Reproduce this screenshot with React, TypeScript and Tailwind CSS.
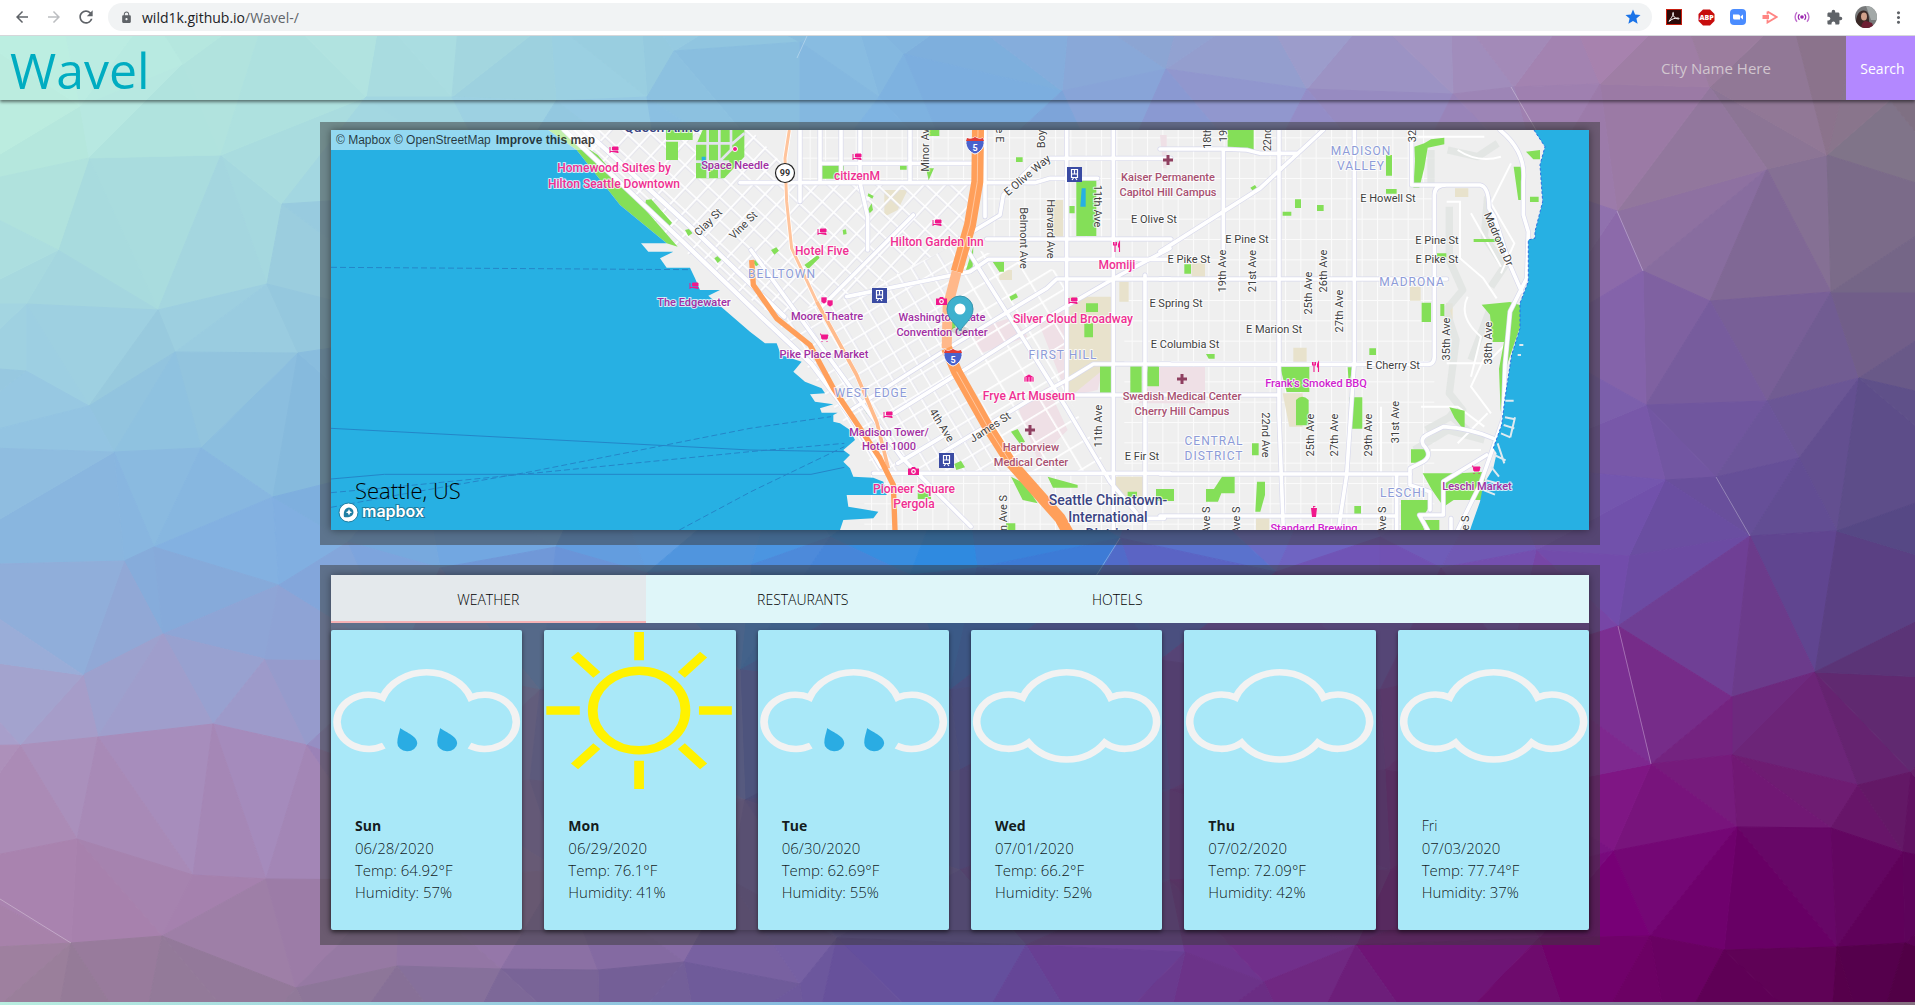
import React from "react";
import {
  MdArrowBack,
  MdArrowForward,
  MdExtension,
  MdLock,
  MdMoreVert,
  MdRefresh,
  MdStar,
} from "react-icons/md";

type Pt = [number, number];

/* ---------- low-poly background ---------- */

const meshPoints: Pt[] = [
  [80, 106], [89, 158], [221, 155], [282, 204], [58, 250], [26, 304], [158, 310], [267, 284],
  [175, 352], [298, 353], [26, 371], [89, 406], [114, 452], [201, 448], [273, 497], [154, 547],
  [124, 561], [279, 585], [163, 634], [83, 675], [265, 659], [98, 737], [213, 724], [307, 745],
  [20, 745], [77, 839], [193, 875], [266, 879], [71, 943], [162, 936], [296, 988],
  [-60, 190], [-50, 304], [-40, 366], [-70, 446], [-80, 566], [-60, 655], [-50, 746], [-70, 868], [-60, 950],
  [1617, 211], [1643, 271], [1767, 169], [1827, 155], [1890, 100], [1710, 301], [1831, 292],
  [1646, 405], [1767, 401], [1859, 378], [1665, 480], [1716, 477], [1799, 458], [1629, 556],
  [1750, 536], [1837, 531], [1618, 626], [1815, 672], [1732, 697], [1732, 755], [1651, 764],
  [1858, 785], [1613, 851], [1737, 827], [1831, 828], [1903, 852], [1911, 772], [1724, 950],
  [1837, 947], [1650, 936], [1905, 943],
  [1970, 200], [1990, 292], [1975, 405], [1980, 480], [2000, 580], [1990, 680], [1990, 870], [1980, 970],
  [183, 64], [800, 42], [674, 51], [1166, 69], [1514, 87], [904, 54], [366, 97], [452, 97],
  [556, 101], [879, 97], [1062, 91], [1307, 89], [1453, 94], [1710, 87], [1600, 84], [647, 97],
  [-50, 20], [60, 5], [150, 12], [270, 0], [380, 15], [460, 4], [550, 20], [640, 5], [740, 10],
  [850, 0], [960, 14], [1070, 4], [1180, 15], [1260, 5], [1370, 14], [1450, 2], [1570, 12],
  [1680, 4], [1790, 10], [1860, 20], [1980, 20],
  [500, 190], [660, 180], [800, 200], [960, 185], [1110, 195], [1260, 180], [1400, 200], [1540, 185],
  [450, 330], [640, 320], [830, 340], [1010, 320], [1190, 330], [1370, 320], [1530, 340],
  [420, 460], [600, 450], [780, 460], [960, 445], [1150, 455], [1330, 450], [1500, 465],
  [556, 547], [830, 537], [1120, 538], [1380, 537], [1536, 550], [751, 565], [440, 568], [647, 573],
  [910, 575], [977, 568], [1276, 572], [348, 542], [1099, 575], [1441, 568],
  [400, 660], [540, 690], [740, 670], [950, 690], [1160, 660], [1380, 690], [1510, 660],
  [430, 790], [530, 780], [745, 800], [960, 770], [1170, 790], [1385, 770], [1520, 790],
  [400, 880], [560, 870], [730, 880], [960, 870], [1170, 880], [1390, 870], [1500, 880],
  [397, 966], [501, 969], [598, 970], [684, 962], [800, 984], [837, 938], [1026, 945],
  [1185, 952], [1264, 982], [1356, 945], [1539, 938],
  [-40, 1040], [50, 1060], [140, 1050], [250, 1040], [330, 1060], [460, 1050], [600, 1060],
  [700, 1050], [810, 1060], [960, 1060], [1090, 1050], [1160, 1060], [1300, 1060], [1430, 1050],
  [1580, 1060], [1670, 1050], [1830, 1050], [1870, 1060], [2000, 1060],
];

const gradX = [0, 320, 640, 960, 1280, 1600, 1915];
const gradY = [35, 160, 300, 420, 560, 660, 780, 900, 1000];
const gradColors = [
  ["#bdeee0", "#b2e4e0", "#98cde0", "#7db0de", "#9a9fce", "#a883b0", "#857080"],
  ["#b8eade", "#a8dbe0", "#8fc4e2", "#78ade0", "#9290cc", "#9c79a8", "#7c7286"],
  ["#a6d8e0", "#9bcddf", "#80b5e0", "#609cdf", "#8080c4", "#8866aa", "#746288"],
  ["#95c6e2", "#8abede", "#70a8e0", "#4090e0", "#7470c4", "#7a5aa8", "#5f5089"],
  ["#88b4de", "#7daae0", "#5b98e0", "#2888e0", "#6a62c4", "#7050ae", "#524482"],
  ["#9fa8d4", "#92a0d0", "#7088d0", "#4a6ac8", "#7648ac", "#7c3696", "#5e3276"],
  ["#ae92bc", "#a48abd", "#7c72b8", "#5a58b0", "#703a98", "#801a86", "#641f68"],
  ["#aa82ae", "#a07eab", "#8c70a8", "#6858a6", "#75308f", "#780078", "#5c0058"],
  ["#997e99", "#8f7899", "#735f98", "#634d9d", "#6e2a82", "#6e0066", "#500045"],
];

const channels = (hex: string) => [1, 3, 5].map((i) => parseInt(hex.slice(i, i + 2), 16));

function locate(stops: number[], v: number): [number, number] {
  const clamped = Math.min(Math.max(v, stops[0]), stops[stops.length - 1]);
  let i = 0;
  while (i < stops.length - 2 && clamped > stops[i + 1]) i++;
  return [i, (clamped - stops[i]) / (stops[i + 1] - stops[i])];
}

function shade(x: number, y: number, seed: number) {
  const [i, u] = locate(gradX, x);
  const [j, v] = locate(gradY, y);
  const [a, b] = [channels(gradColors[j][i]), channels(gradColors[j][i + 1])];
  const [c, d] = [channels(gradColors[j + 1][i]), channels(gradColors[j + 1][i + 1])];
  const wobble = ((seed * 37) % 9) - 4;
  const mix = a.map((_, k) => {
    const top = a[k] * (1 - u) + b[k] * u;
    const bottom = c[k] * (1 - u) + d[k] * u;
    return Math.max(0, Math.round(top * (1 - v) + bottom * v + wobble * 0.4));
  });
  return `rgb(${mix.join(",")})`;
}

/* Bowyer-Watson triangulation */
function triangulate(input: Pt[]) {
  const pts: Pt[] = [...input, [-9000, -9000], [12000, -9000], [950, 14000]];
  const n = input.length;
  const circle = (a: number, b: number, c: number) => {
    const [ax, ay] = pts[a], [bx, by] = pts[b], [cx, cy] = pts[c];
    const d = 2 * (ax * (by - cy) + bx * (cy - ay) + cx * (ay - by));
    const a2 = ax * ax + ay * ay, b2 = bx * bx + by * by, c2 = cx * cx + cy * cy;
    const x = (a2 * (by - cy) + b2 * (cy - ay) + c2 * (ay - by)) / d;
    const y = (a2 * (cx - bx) + b2 * (ax - cx) + c2 * (bx - ax)) / d;
    return { v: [a, b, c], x, y, r: (ax - x) ** 2 + (ay - y) ** 2 };
  };
  let tris = [circle(n, n + 1, n + 2)];
  for (let p = 0; p < n; p++) {
    const [px, py] = pts[p];
    const edges = new Map<string, [number, number]>();
    tris = tris.filter((t) => {
      if ((t.x - px) ** 2 + (t.y - py) ** 2 >= t.r) return true;
      for (let e = 0; e < 3; e++) {
        const a = t.v[e], b = t.v[(e + 1) % 3];
        const key = a < b ? `${a}-${b}` : `${b}-${a}`;
        if (edges.has(key)) edges.delete(key);
        else edges.set(key, [a, b]);
      }
      return false;
    });
    edges.forEach(([a, b]) => tris.push(circle(a, b, p)));
  }
  return tris.filter((t) => t.v.every((i) => i < n)).map((t) => t.v.map((i) => pts[i]));
}

const facets = triangulate(meshPoints).map((t, i) => {
  const cx = (t[0][0] + t[1][0] + t[2][0]) / 3;
  const cy = (t[0][1] + t[1][1] + t[2][1]) / 3;
  return { d: t.map((p) => p.join(",")).join(" "), fill: shade(cx, cy, i) };
});

function Backdrop() {
  return (
    <svg
      className="absolute inset-0 h-full w-full"
      viewBox="0 36 1915 966"
      preserveAspectRatio="none"
      aria-hidden="true"
    >
      {facets.map((f, i) => (
        <polygon key={i} points={f.d} fill={f.fill} stroke={f.fill} strokeWidth="1" />
      ))}
      <g stroke="#fff" strokeOpacity=".3" fill="none">
        <path d="M1511 87 1536 130M1617 211 1643 271M1716 477 1750 536M1618 626 1651 764M0 899 71 943M1120 538 1096 576M807 36 797 58" />
      </g>
    </svg>
  );
}

/* ---------- browser bar ---------- */

function BarButton({ label, children, className = "" }: { label: string; children: React.ReactNode; className?: string }) {
  return (
    <button type="button" aria-label={label} className={`flex w-8 items-center justify-center ${className}`}>
      {children}
    </button>
  );
}

function BrowserBar() {
  return (
    <div className="flex h-9 items-stretch border-b border-[#d5d7da] bg-white pr-[1px] pb-[1px] pl-[6px] text-[#5f6368]">
      <BarButton label="Back"><MdArrowBack size={18} /></BarButton>
      <BarButton label="Forward" className="text-[#bcbec1]"><MdArrowForward size={18} /></BarButton>
      <BarButton label="Reload"><MdRefresh size={20} /></BarButton>
      <div className="mx-[6px] my-[3px] flex flex-1 items-center rounded-full bg-[#f1f3f4] pr-[10px] pl-3">
        <MdLock size={13} />
        <div className="relative ml-[9px] flex-1 text-[14px]">
          <span className="text-[#202124]">wild1k.github.io</span>/Wavel-/
          <input aria-label="Address" className="absolute inset-0 w-full bg-transparent outline-none" />
        </div>
        <button type="button" aria-label="Bookmark" className="text-[#1a73e8]"><MdStar size={18} /></button>
      </div>
      <BarButton label="PDF">
        <svg width="16" height="16" viewBox="0 0 16 16">
          <rect x=".5" y=".5" width="15" height="15" fill="#2b0b0a" stroke="#c81e0f" />
          <path d="M3 12.500c1-2 4-5.500 4.500-8 .3-1.500-1-1.500-.8 0C7 7 9 10 12.500 10c1 0 .8-1-.5-1C9 9 5 10 3.500 12.500" fill="none" stroke="#fff" />
        </svg>
      </BarButton>
      <BarButton label="Adblock Plus">
        <svg width="17" height="17" viewBox="0 0 17 17">
          <path d="M5 .5h7L16.500 5v7L12 16.500H5L.5 12V5z" fill="#c70d0d" />
          <text x="8.5" y="11" textAnchor="middle" fontSize="7" fontWeight="800" fill="#fff" className="font-['Open_Sans',sans-serif]">ABP</text>
        </svg>
      </BarButton>
      <BarButton label="Zoom">
        <svg width="16" height="16" viewBox="0 0 16 16">
          <rect width="16" height="16" rx="4" fill="#4a8cff" />
          <path d="M3 5.500h5.500a1.500 1.500 0 0 1 1.500 1.500v3.500H4.500A1.500 1.500 0 0 1 3 9zM10.500 7.500 13 5.500v5l-2.500-2z" fill="#fff" />
        </svg>
      </BarButton>
      <BarButton label="Screen recorder">
        <svg width="16" height="14" viewBox="0 0 16 14" fill="none" stroke="#ff8583" strokeWidth="1.800">
          <path d="M5.500 1.500 14.500 7l-9 5.500V9.500M5.500 1.500v3" />
          <path d="M.5 5H7v4H.5z" fill="#ff8583" stroke="none" />
        </svg>
      </BarButton>
      <BarButton label="Broadcast">
        <svg width="16" height="14" viewBox="0 0 16 14" fill="none" stroke="#c06fce" strokeWidth="1.400">
          <circle cx="8" cy="7" r="1.800" fill="#9c27b0" stroke="none" />
          <path d="M5.500 4.200a4 4 0 0 0 0 5.600M10.500 4.200a4 4 0 0 1 0 5.600" stroke="#9c27b0" />
          <path d="M3 2.200a7 7 0 0 0 0 9.600M13 2.200a7 7 0 0 1 0 9.600" />
        </svg>
      </BarButton>
      <BarButton label="Extensions"><MdExtension size={17} /></BarButton>
      <BarButton label="Profile">
        <svg width="22" height="22" viewBox="0 0 22 22">
          <defs><clipPath id="face"><circle cx="11" cy="11" r="11" /></clipPath></defs>
          <g clipPath="url(#face)">
            <path d="M0 0h22v22H0z" fill="#77797a" />
            <path d="M11 0h11v14h-6z" fill="#a3a9a8" />
            <path d="M1 22C0 12 3 5 8 4.500S14 9 14 14l1 8z" fill="#3a2826" />
            <ellipse cx="9" cy="10.500" rx="3" ry="4" fill="#d0a08a" />
            <path d="M6 22c1-5 2-7 5-7l6 2 2 5z" fill="#6d1f33" />
          </g>
        </svg>
      </BarButton>
      <BarButton label="Menu"><MdMoreVert size={19} /></BarButton>
    </div>
  );
}

/* ---------- map ---------- */

type Tone = "pink" | "purple" | "magenta" | "rose" | "street" | "area" | "town";
const tones: Record<Tone, { fill: string; size: number; weight: number; cls: string }> = {
  pink: { fill: "#ef2f92", size: 12, weight: 500, cls: "" },
  purple: { fill: "#a12fa3", size: 11, weight: 500, cls: "" },
  magenta: { fill: "#d01fd0", size: 11, weight: 500, cls: "" },
  rose: { fill: "#a85070", size: 11, weight: 500, cls: "" },
  street: { fill: "#3f3f3f", size: 11, weight: 400, cls: "" },
  area: { fill: "#8d9bd8", size: 12, weight: 400, cls: "tracking-[1px]" },
  town: { fill: "#3a4483", size: 14, weight: 500, cls: "" },
};

const labels: [string, number, number, Tone, number?][] = [
  ["Queen Anne", 331, -2, "town"],
  ["Homewood Suites by", 283, 38, "pink"], ["Hilton Seattle Downtown", 283, 54, "pink"],
  ["Space Needle", 404, 35, "purple"], ["Clay St", 377, 92, "street", -45], ["Vine St", 412, 95, "street", -45],
  ["BELLTOWN", 451, 144, "area"], ["The Edgewater", 363, 172, "purple"],
  ["citizenM", 526, 46, "pink"], ["Hotel Five", 491, 121, "pink"], ["Hilton Garden Inn", 606, 112, "pink"],
  ["Moore Theatre", 496, 186, "purple"], ["Pike Place Market", 493, 224, "purple"],
  ["WEST EDGE", 540, 263, "area"], ["Madison Tower/", 558, 302, "purple"], ["Hotel 1000", 558, 316, "purple"],
  ["Pioneer Square", 583, 359, "pink"], ["Pergola", 583, 374, "pink"],
  ["Washington State", 611, 187, "purple"], ["Convention Center", 611, 202, "purple"],
  ["Silver Cloud Broadway", 742, 189, "pink"], ["FIRST HILL", 732, 225, "area"],
  ["Frye Art Museum", 698, 266, "pink"], ["Harborview", 700, 317, "rose"], ["Medical Center", 700, 332, "rose"],
  ["Momiji", 786, 135, "pink"], ["4th Ave", 611, 295, "street", 58], ["James St", 659, 297, "street", -33],
  ["Minor Av", 594, 20, "street", -90], ["E Olive Way", 696, 45, "street", -40],
  ["Belmont Ave", 693, 108, "street", 90], ["Harvard Ave", 720, 99, "street", 90],
  ["11th Ave", 767, 76, "street", 90], ["11th Ave", 767, 296, "street", -90],
  ["e E", 669, 5, "street", 90], ["Boy", 710, 9, "street", -90], ["E Fir St", 811, 326, "street"],
  ["n Ave S", 672, 383, "street", -90], ["Seattle Chinatown-", 777, 371, "town"],
  ["International", 777, 388, "town"], ["District", 777, 405, "town"],
  ["Kaiser Permanente", 837, 47, "rose"], ["Capitol Hill Campus", 837, 62, "rose"],
  ["E Olive St", 823, 89, "street"], ["18th", 876, 8, "street", -90], ["19", 892, 6, "street", -90],
  ["22nd", 936, 9, "street", -90], ["MADISON", 1030, 21, "area"], ["VALLEY", 1030, 36, "area"],
  ["32", 1081, 6, "street", -90], ["E Howell St", 1057, 68, "street"], ["E Pine St", 916, 109, "street"],
  ["E Pike St", 858, 129, "street"], ["19th Ave", 891, 141, "street", -90], ["21st Ave", 921, 141, "street", -90],
  ["25th Ave", 977, 163, "street", -90], ["26th Ave", 992, 141, "street", -90], ["27th Ave", 1008, 181, "street", -90],
  ["E Pine St", 1106, 110, "street"], ["E Pike St", 1106, 129, "street"], ["MADRONA", 1081, 152, "area"],
  ["Madrona Dr", 1168, 109, "street", 66], ["E Spring St", 845, 173, "street"], ["E Marion St", 943, 199, "street"],
  ["E Columbia St", 854, 214, "street"], ["35th Ave", 1115, 209, "street", -90], ["38th Ave", 1157, 213, "street", -90],
  ["E Cherry St", 1062, 235, "street"], ["Frank’s Smoked BBQ", 985, 253, "magenta"],
  ["Swedish Medical Center", 851, 266, "rose"], ["Cherry Hill Campus", 851, 281, "rose"],
  ["CENTRAL", 883, 311, "area"], ["DISTRICT", 883, 326, "area"], ["22nd Ave", 935, 305, "street", 90],
  ["25th Ave", 979, 305, "street", -90], ["27th Ave", 1003, 305, "street", -90], ["29th Ave", 1037, 305, "street", -90],
  ["31st Ave", 1064, 292, "street", -90], ["LESCHI", 1072, 363, "area"], ["Leschi Market", 1146, 356, "purple"],
  ["Standard Brewing", 983, 398, "magenta"], ["Ave S", 875, 390, "street", -90], ["Ave S", 905, 390, "street", -90],
  ["Ave S", 1051, 390, "street", -90], ["e S", 1134, 393, "street", -90],
];

const beds: Pt[] = [[283, 20], [363, 156], [526, 27], [491, 102], [606, 93], [557, 285], [742, 171]];
const cameras: Pt[] = [[611, 171], [583, 341]];
const crosses: Pt[] = [[837, 30], [699, 300], [851, 249]];
const stations: Pt[] = [[743, 44], [548, 165], [615, 330]];
const interstates: Pt[] = [[644, 16], [622, 228]];
const forks: Pt[] = [[786, 117], [985, 237]];
const shops: Pt[] = [[493, 208], [1145, 340]];

/* Streets are traced on a grid three times finer than the map. */
const majorRoads = [
  "M1227 158H2112L2157 145H2300M1407 0V215M1467 0V158M1530 0V158M1587 0V158L1610 260V360M1737 0V158M1467 100H1930",
  "M1962 0V260M1967 327H2520M2517 388H1972L1917 425 1547 500M2517 447H2177L2147 475 1867 645 1560 840M2517 702H2287L2217 745 2087 815 1830 970",
  "M2517 355 2367 435 2127 575 1907 715 1690 850M1887 325 2057 595 2207 835 2337 1055 2430 1165H2500M2347 0V1200M2207 0V795M2517 1030H1627M2442 435V1200",
  "M2207 795H2840M1900 320 2007 255 2017 195 2107 105 2157 85H2520M1467 535 1747 255M1260 360 1710 980 1920 1190M1700 1000 1850 910",
  "M2487 57H2677L2747 60 2787 70H2897M2977 0 2787 175 2487 365M2677 57V355M2844 0V855L2857 1200M3070 0V695L3047 1035 3022 1200",
  "M2487 447H3347M2487 703H3290Q3310 703 3310 680V195Q3310 165 3347 165H3447Q3474 170 3474 235L3490 260 3537 405 3572 485M3242 0V165H3347",
  "M3507 0Q3587 65 3577 155V255L3592 305 3587 445 3537 545 3522 705 3517 865 3447 1065 3397 1165 3380 1200M2487 1032H3237M2487 1158H3197M3197 1035V1200",
  "M3487 925Q3417 895 3337 890L3287 915Q3267 925 3277 945 3307 975 3277 995L3237 1015V1065L3297 1085V1140M3467 975 3337 1055V1155H3265L3290 1200M3360 1165V1200",
];

const parks =
  "M1005 35h36v55h-36zM1005 0h80v30h-80zM1095 45l20-45h125v80l-60 65h-85zM1461 100h78v46h-78zM1790 0h35v18h-35zM1785 115h24l-16 36zM2236 150h60v168h-60zM2215 228h16v22h-16zM1707 105h20v14h-20zM2055 82h20v14h-20zM2307 709h34v79h-34zM2398 709h34v79h-34zM2450 709h34v60h-40zM2265 520h36v26h-36zM2260 580h26v42h-26zM2035 500l20-10 6 12-20 10zM1905 420l22-70-2 60-14 15zM2040 905l20-8 22 38-14 8zM2150 1040l90 25v8h-74zM2040 1040l40 20 40 60-45-10zM2475 1077h54v36h-54zM2390 1085h28v16h-28zM1870 1002l20-10 12 20-26 8zM1985 395h34v30h-14zM1760 1085h40v22h-40zM2025 1180h28v20h-28zM2690 0h78v62l-78-10zM3250 50l30-10 20-12 40-5v20l-50 10-10 60-15 60h-18l5-80zM3165 75h18v62h-18zM3165 177h32v14h-32zM2892 208h18v26h-18zM2855 245h26v12h-26zM2958 225h20v18h-20zM2758 173l14-8 8 12-14 6zM3428 327h80v9h-80zM3318 370h28v12h-28zM2560 403h20v28h-20zM3272 518h28v58h-28zM3328 522h12v36h-12zM3452 524l85-8 32 10v60l-45 130-15 130-5-130 15-80h-34l-8-82zM3548 110h22l2 100h-10zM3585 65l42-5v28h-20zM3597 200h26v16h-26zM3115 655h20v20h-20zM2847 710h88v76h-68zM2895 810q18-20 38 0v76h-38zM3056 802h38v94h-38zM3050 712h14l-10 60zM2763 940h20v36h-20zM2673 1040h38v50h-40l-10 25h-36v-38h24zM2778 1055h24v40l-14 50h-15zM3240 958h40l10 20-20 20h-30zM3355 832l46 10v62l-30-40zM3275 1030h110l80-5-12 85h-85l-30 20-35-50zM3210 1110h85v20l-25 40 10 30h-70zM3275 1170h50v30h-40zM3070 1128h20v24h-20zM2625 672h26v14h-18zM1265 395l16-10 10 14-16 10zM1320 360l16-8 8 10-14 12zM945 210l16-2 62 70-14 18-68-66zM1062 300l14-4 8 14-12 8zM1150 385l14-10 10 12-14 12zM1850 580l20-8 4 20-16 8zM1612 190l16 8-4 8-14-8zM1610 240l12-20 4 20-10 10zM1420 405l40-30 6 8-34 34zM1535 300l10-2 2 14-10 2zM1600 830l14 14-6 8-10-16z";

function PoiIcons() {
  return (
    <g>
      {beds.map(([x, y], i) => (
        <path key={i} transform={`translate(${x - 4} ${y - 3})`} d="M0 0v6M0 4.500h8V6M2.500 3V0H8v3z" fill="#f0188c" stroke="#f0188c" strokeWidth="1" />
      ))}
      {cameras.map(([x, y], i) => (
        <g key={i} transform={`translate(${x - 6} ${y - 4})`}>
          <path d="M0 1.500h3L4 0h3l1 1.500h3V8H0z" fill="#f0188c" />
          <circle cx="5.500" cy="4.500" r="1.800" fill="none" stroke="#fff" strokeWidth="1.200" />
        </g>
      ))}
      {crosses.map(([x, y], i) => (
        <path key={i} transform={`translate(${x} ${y})`} d="M-1.500-5h3v3.500H5v3H1.500V5h-3V1.500H-5v-3h3.500z" fill="#8f3f60" />
      ))}
      {stations.map(([x, y], i) => (
        <g key={i} transform={`translate(${x - 7} ${y - 7})`}>
          <path d="M0 0h15v15H0z" fill="#3a4ba3" />
          <path d="M4.500 2.500h6v8h-6zM7.500 3v4M5 7h5M5 13l1.500-2M10 13l-1.500-2" fill="none" stroke="#fff" strokeWidth="1.200" />
        </g>
      ))}
      {interstates.map(([x, y], i) => (
        <g key={i} transform={`translate(${x} ${y})`}>
          <path d="M-8-8q4 2 8-1 4 3 8 1l1 3c1 7-5 12-9 13-4-1-10-6-9-13z" fill="#4a62cc" stroke="#fff" />
          <path d="M-8-8q4 2 8-1 4 3 8 1l1 3H-9z" fill="#e23b35" />
          <text y="5" textAnchor="middle" fontSize="9" fontWeight="700" fill="#fff">5</text>
        </g>
      ))}
      <circle cx="454" cy="43" r="9.500" fill="#fff" stroke="#222" strokeWidth="1.200" />
      <text x="454" y="46" textAnchor="middle" fontSize="9" fontWeight="700" fill="#333">99</text>
      {forks.map(([x, y], i) => (
        <path key={i} transform={`translate(${x} ${y})`} d="M-2 5v-7M-3.500-5v3h3v-3M-2-5v3M2.500 5V-5q-1.500 2-1 5h1" fill="none" stroke="#f0188c" strokeWidth="1.100" />
      ))}
      {shops.map(([x, y], i) => (
        <path key={i} transform={`translate(${x} ${y})`} d="M-4-4h1l1 5h5l1-4h-6M-2 3v1M3 3v1" fill="#f0188c" stroke="#f0188c" />
      ))}
      <path d="M693 252v-5l5-3 5 3v5zM695 247v5M698 247v5M701 247v5" fill="#f0188c" stroke="#fff" strokeWidth=".7" />
      <path d="M490 167h6v5l-3 2-3-2zM496 170h6v5l-3 2-3-2z" fill="#f0188c" stroke="#fff" strokeWidth=".6" />
      <path d="M980 378h6l-1 9h-4zM982 378v-2h3" fill="#f0188c" />
      <circle cx="404" cy="19" r="2.500" fill="#f0188c" stroke="#fff" />
    </g>
  );
}

function CityMap() {
  return (
    <svg
      role="img"
      aria-label="Map of Seattle"
      viewBox="0 0 1258 400"
      preserveAspectRatio="xMidYMid slice"
      className="block h-full w-full font-[Roboto,sans-serif]"
    >
      <defs>
        <pattern id="belltown" width="47" height="50" patternUnits="userSpaceOnUse" patternTransform="rotate(43)">
          <path d="M0 0H47M0 0V50" stroke="#dcdcea" strokeWidth="15" />
          <path d="M0 0H47M0 0V50" stroke="#fff" strokeWidth="11" />
        </pattern>
        <pattern id="downtown" width="44" height="48" patternUnits="userSpaceOnUse" patternTransform="rotate(-31)">
          <path d="M0 0H44M0 0V48" stroke="#dcdcea" strokeWidth="14" />
          <path d="M0 0H44M0 0V48" stroke="#fff" strokeWidth="10" />
        </pattern>
        <pattern id="firsthill" width="78" height="70" patternUnits="userSpaceOnUse" patternTransform="rotate(-31)">
          <path d="M0 0H78M0 0V70" stroke="#fff" strokeWidth="10" />
        </pattern>
        <pattern id="east" width="46" height="61" patternUnits="userSpaceOnUse" patternTransform="translate(10 22)">
          <path d="M0 0H46M0 0V61" stroke="#fff" strokeWidth="6" strokeOpacity=".75" />
        </pattern>
      </defs>
      <path d="M0 0h1258v400H0z" fill="#efefef" />
      <g transform="scale(.33333)">
        <path d="M2380 0h930v1200h-930zM1967 0h413v330h-413zM1407 0h560v158h-560z" fill="url(#east)" />
        <path d="M1600 1030h800v170h-800z" fill="url(#east)" />
        <path d="M2120 570l130-70 90 120-40 160-90 20zM2060 830l90-60 60 130-90 90zM1920 600l130-40 40 60-140 50zM2487 710h135v110h-200zM2487 15h20v100h-10z" fill="#efe0e6" />
        <path d="M2210 500h130v200l-110 90h-20zM2365 455h28v60h-28zM1660 180h70l-30 60-40 20zM2160 210h36v110h-36zM2855 790h60v100h-40zM2887 653h40v42h-40zM3237 470h32v42h-32zM3345 520h20v48h-20zM2582 400h40v40h-40zM3372 175h40v26h-40zM2350 1040h90v60h-90zM2775 1160h40v40h-40zM2005 420h38v30h-38z" fill="#e8e2cc" />
        <path d="M690 0 1260 0 1407 158H1960L1900 330 1560 500 1330 560 1007 325z" fill="url(#belltown)" />
        <path d="M1560 500 1900 330 1850 600 1900 740 2060 1030H1640L1330 560z" fill="url(#downtown)" />
        <path d="M1900 350 2207 430V795L2337 1030H2060L1860 640z" fill="url(#firsthill)" />
        <g fill="none" stroke="#e0e3e1" strokeWidth="22" strokeLinejoin="round" strokeOpacity=".8">
          <path d="M3355 230v160l40 90-50 60 30 90-20 160 40 50-110 60M3470 200l-10 120 60 90-40 60M3350 60l90 20 60-40M3420 690l60-160M3250 960l100-60 110 30M3300 60v110M3350 850l60 50" />
        </g>
        <g fill="none" stroke="#fff" strokeWidth="6">
          <path d="M3347 215h40v170l70 60 40 60M3380 60q60 40 130 20M3540 100l-60 120 70 120-40 90M3410 500q-30 60 40 120l-30 120M3347 700h120l60-60M3480 640l-60 130 60 80M3270 830h110l80 60M3300 960h150M3260 20h200M3150 830v200M3420 250l90 160M3380 940l90-90" />
        </g>
        <path d={parks} fill="#84df58" />
        <path d="M1130 0v145M1165 0v145M1095 40h110l35-30M1095 95h100M1200 0v60l-60 60" fill="none" stroke="#e3e3ee" strokeWidth="8" />
        <path d="M1112 80h12v26h-12zM1124 106h14v12h-14z" fill="#27b0e3" />
        <path d="M652 0H690L800 75 1040 350 1007 340 867 225 737 60z" fill="#84df58" />
        <path d="M2252 175h12v55h-16z" fill="#27b0e3" />
        <g fill="none" strokeLinejoin="round" strokeLinecap="round">
          {majorRoads.map((d, i) => <path key={i} d={d} stroke="#d8d9ec" strokeWidth="15" />)}
          {majorRoads.map((d, i) => <path key={i} d={d} stroke="#fff" strokeWidth="11" />)}
          <path d="M700 0 1050 330 1290 560 1440 700 1560 860 1650 1010M760 0 1100 310 1360 560" stroke="#d8d9ec" strokeWidth="17" />
          <path d="M700 0 1050 330 1290 560 1440 700 1560 860 1650 1010M760 0 1100 310 1360 560" stroke="#fff" strokeWidth="13" />
        </g>
        <path d="M652 0 737 60 867 225 1007 340H930L952 365H1027L987 385 1007 413H1077L1092 445 1107 480H1167L1132 497 1257 605 1302 640H1337L1350 675 1412 695 1387 725 1422 755 1472 775 1482 790 1437 793 1452 815 1507 823 1467 835 1472 848H1520L1507 855V875L1527 880 1557 900 1572 930 1537 960 1557 975 1537 995 1557 1015 1567 1040 1627 1043 1657 1055 1667 1095H1547L1552 1130 1642 1145 1627 1165 1537 1170 1527 1200H0V0z" fill="#27b0e3" />
        <path d="M3609 0 3642 50 3627 105 3635 215 3612 305V325L3592 330V455L3567 520V595L3542 675 3522 805 3512 885 3487 955 3497 970 3487 1015 3457 1065 3447 1115 3417 1200H3774V0z" fill="#27b0e3" />
        <path d="M3609 0 3642 50 3627 105 3635 215 3612 305V325L3592 330V455L3567 520V595L3542 675 3522 805 3512 885 3487 955" fill="none" stroke="#2b6fe0" strokeWidth="3" strokeDasharray="8 6" />
        <path d="M3523 812h25M3522 862l30 6M3518 885l32 10M3510 910l28 12M3552 862l-14 60M3500 940l20 60M3490 975l34 16M3480 1010l24 30M3462 1050l36 10M3458 1080l34 14M3565 645h12M3560 675h10" stroke="#dfeaf0" strokeWidth="6" />
        <path d="M0 412 1080 419M0 1088 200 1070 1257 965 1540 940M0 1132 200 1095 600 1025 1257 895 1500 860M1045 1200 1260 1085 1540 950" fill="none" stroke="#2486c8" strokeWidth="3" strokeDasharray="18 9" />
        <path d="M0 895 1257 960 1540 965M0 1047 160 1033H1440L1540 1012" fill="none" stroke="#2486c8" strokeWidth="3" />
        <g fill="none" strokeLinejoin="round">
          <path d="M1375 0 1362 85 1367 215 1382 355 1457 515 1577 735 1637 875 1672 1015" stroke="#fff" strokeWidth="14" />
          <path d="M1375 0 1362 85 1367 215 1382 355 1457 515" stroke="#ffc49c" strokeWidth="9" />
          <path d="M1457 515 1577 735 1637 875 1672 1015" stroke="#ffbb8c" strokeWidth="11" />
          <path d="M1262 390 1267 465 1337 565 1437 645 1507 775 1647 985 1687 1065 1692 1200" stroke="#ff9f5a" strokeWidth="16" />
          <path d="M1941 0 1939 155 1917 285 1877 425" stroke="#ff9f5a" strokeWidth="36" />
          <path d="M1877 425 1850 530 1847 655" stroke="#ffb88a" strokeWidth="30" />
          <path d="M1847 655 1877 725 1967 885 2037 995 2187 1165 2212 1210" stroke="#ff9f5a" strokeWidth="34" />
          <path d="M1941 0 1939 155 1917 285 1877 425M1877 725 1967 885 2037 995" stroke="#ffc79f" strokeWidth="3" />
        </g>
      </g>
      <PoiIcons />
      <g className="[paint-order:stroke]" stroke="#fff" strokeOpacity=".75" strokeWidth="2" strokeLinejoin="round">
        {labels.map(([text, x, y, tone, angle], i) => {
          const t = tones[tone];
          return (
            <text
              key={i}
              x={x}
              y={y + 4}
              textAnchor="middle"
              fontSize={t.size}
              fontWeight={t.weight}
              fill={t.fill}
              className={t.cls}
              transform={angle ? `rotate(${angle} ${x} ${y})` : undefined}
            >
              {text}
            </text>
          );
        })}
      </g>
      <ellipse cx="629" cy="200" rx="9" ry="4" fill="#000" fillOpacity=".12" />
      <path d="M629 201c-3-6-13-12-13-22a13 13 0 0 1 26 0c0 10-10 16-13 22z" fill="#3fb1ce" stroke="#3594ad" />
      <circle cx="629" cy="179" r="5.500" fill="#fff" />
    </svg>
  );
}

function MapPanel() {
  return (
    <section className="bg-[#3a3a3a]/50 px-[11px] pt-2 pb-[15px]">
      <div className="relative h-[400px] overflow-hidden shadow-[0_0_8px_rgba(0,0,0,0.45)]">
        <CityMap />
        <div className="absolute top-0 left-0 flex h-5 items-center gap-[3px] bg-white/50 px-[5px] font-['Liberation_Sans',sans-serif] text-[12px] text-black/75">
          <a href="#mapbox">© Mapbox</a>
          <a href="#osm">© OpenStreetMap</a>
          <a href="#improve" className="ml-[2px] font-bold">Improve this map</a>
        </div>
        <h2 className="absolute bottom-[25px] left-6 text-[22px] leading-[30px] font-light text-black">Seattle, US</h2>
        <a href="#mapbox-home" aria-label="mapbox" className="absolute bottom-[7px] left-[7px] flex items-center gap-[3px]">
          <svg width="21" height="21" viewBox="0 0 21 21">
            <circle cx="10.500" cy="10.500" r="9.500" fill="#fff" stroke="#1f7fa3" />
            <path d="M6 15c-1-5 1-9.500 5-9.500a4.700 4.700 0 0 1 4.500 4.700C15.500 14 11 16 6 15z" fill="#1f7fa3" />
            <path d="m11 7 1 2.200 2.200 1-2.200 1-1 2.200-1-2.200-2.200-1 2.200-1z" fill="#fff" />
          </svg>
          <span className="pb-[2px] font-[Inter,sans-serif] text-[16px] leading-5 font-semibold text-white [paint-order:stroke] [-webkit-text-stroke:2px_#1f7fa3]">
            mapbox
          </span>
        </a>
      </div>
    </section>
  );
}

/* ---------- weather ---------- */

type Sky = "rain" | "sun" | "cloud";

function SkyIcon({ sky }: { sky: Sky }) {
  return (
    <svg viewBox="0 0 163 160" preserveAspectRatio="none" className="block h-[161px] w-full" role="img" aria-label={sky}>
      {sky === "cloud" && (
        <path
          d="M44 67A40.600 40.600 0 0 1 119 67A27 27 0 1 1 114 112A40 40 0 0 1 49 112A27 27 0 1 1 44 67Z"
          fill="none" stroke="#f2f2f2" strokeWidth="6.500"
        />
      )}
      {sky === "rain" && (
        <g>
          <path
            d="M45 115A27 27 0 1 1 44 67A40.600 40.600 0 0 1 119 67A27 27 0 1 1 118 115"
            fill="none" stroke="#f2f2f2" strokeWidth="6.500"
          />
          <path
            d="M59 97.500C62 101 73.500 105 73.500 112.500A8.500 8.200 0 0 1 56.500 112C56.500 107 58 103 59 97.500zM93 97.500C96 101 107.500 105 107.500 112.500A8.500 8.200 0 0 1 90.500 112C90.500 107 92 103 93 97.500z"
            fill="#2aace3"
          />
        </g>
      )}
      {sky === "sun" && (
        <g fill="none" stroke="#fff200" strokeWidth="8.300">
          <circle cx="81" cy="80" r="39.500" />
          <path d="M81 2V30M81 130V158M2 80H30.500M132 80H160M26 24.500 45 44.500M117 44.500 136 24.500M26 135.500 45 115.500M117 115.500 136 135.500" />
        </g>
      )}
    </svg>
  );
}

const days: { day: string; date: string; temp: string; humidity: string; sky: Sky; light?: boolean }[] = [
  { day: "Sun", date: "06/28/2020", temp: "64.92", humidity: "57", sky: "rain" },
  { day: "Mon", date: "06/29/2020", temp: "76.1", humidity: "41", sky: "sun" },
  { day: "Tue", date: "06/30/2020", temp: "62.69", humidity: "55", sky: "rain" },
  { day: "Wed", date: "07/01/2020", temp: "66.2", humidity: "52", sky: "cloud" },
  { day: "Thu", date: "07/02/2020", temp: "72.09", humidity: "42", sky: "cloud" },
  { day: "Fri", date: "07/03/2020", temp: "77.74", humidity: "37", sky: "cloud", light: true },
];

function WeatherPanel() {
  return (
    <section className="bg-[#3a3a3a]/50 px-[11px] pt-[10px] pb-[15px]">
      <div className="shadow-[0_0_8px_rgba(0,0,0,0.4)]">
        <div role="tablist" className="grid h-12 grid-cols-4 bg-[#dff6f9] text-[14px] font-light text-black">
          <button type="button" role="tab" aria-selected="true" className="border-b-2 border-[#f6b2b5] bg-[#e4e9ec] pt-[2px]">
            WEATHER
          </button>
          <button type="button" role="tab" aria-selected="false">RESTAURANTS</button>
          <button type="button" role="tab" aria-selected="false">HOTELS</button>
        </div>
        <div className="mt-[7px] grid grid-cols-6 gap-[22px]">
          {days.map((d) => (
            <article key={d.date} className="h-[300px] overflow-hidden rounded-[2px] bg-[#a9e8f8] shadow-[0_2px_4px_rgba(0,0,0,0.5)]">
              <SkyIcon sky={d.sky} />
              <div className="p-6 text-[15px] leading-[22px] font-light text-black/90">
                <h3 className={d.light ? "text-[14px]" : "text-[14px] font-bold"}>{d.day}</h3>
                <p>{d.date}</p>
                <p>Temp: {d.temp}°F</p>
                <p>Humidity: {d.humidity}%</p>
              </div>
            </article>
          ))}
        </div>
      </div>
    </section>
  );
}

export default function App() {
  return (
    <div className="flex min-h-screen flex-col font-['Open_Sans','Noto_Sans',sans-serif]">
      <BrowserBar />
      <div className="relative flex-1 overflow-hidden">
        <Backdrop />
        <header className="relative flex h-16 justify-between shadow-[0_2px_3px_rgba(0,0,0,0.5)]">
          <a href="#home" className="px-[10px] text-[50px] leading-[68px] text-[#00acc1]">Wavel</a>
          <form className="flex" onSubmit={(e) => e.preventDefault()}>
            <input
              aria-label="City"
              placeholder="City Name Here"
              className="w-[185px] bg-transparent text-[15px] text-white outline-none placeholder:text-[#d1c6cf]"
            />
            <button type="submit" className="w-[69px] bg-[#b388ff] pl-1 text-[14px] text-white">Search</button>
          </form>
        </header>
        <div className="relative pt-[22px] pl-[5px]">
          <main className="mx-auto flex w-[70%] max-w-[1280px] flex-col gap-5">
            <MapPanel />
            <WeatherPanel />
          </main>
        </div>
      </div>
      <div className="h-[3px] bg-linear-to-r from-[#b9eee0] via-[#7db0de] to-[#857080]" />
    </div>
  );
}
